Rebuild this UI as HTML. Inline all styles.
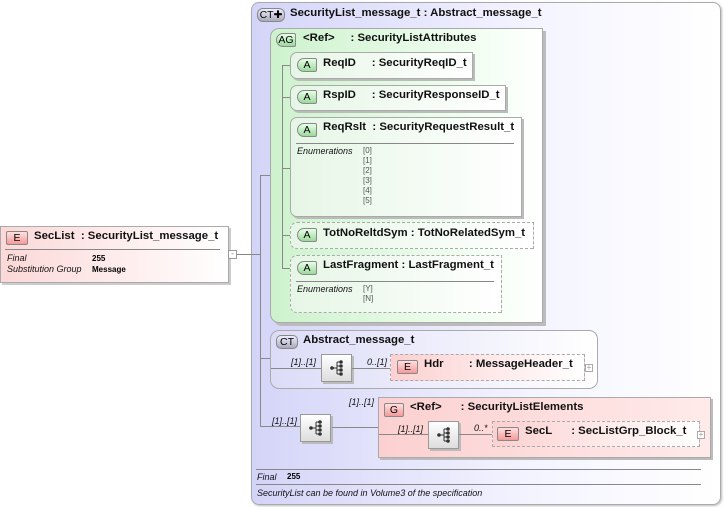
<!DOCTYPE html><html><head><style>
body{margin:0;width:724px;height:507px;background:#fff;font-family:"Liberation Sans",sans-serif;position:relative;overflow:hidden}
div{position:absolute;box-sizing:border-box}
.b{font-weight:bold;font-size:11.4px;color:#111;white-space:nowrap}
.i{font-style:italic;font-size:9px;color:#111;white-space:nowrap}
.s{font-size:8px;color:#555}
.tag{font-size:10.5px;border:1px solid #888;text-align:center;line-height:12px;height:14px;border-radius:2px}
.sh{filter:drop-shadow(2px 2px 0 #bbb)}
.att{background:linear-gradient(90deg,#e6f6e6,#fff);border:1px solid #aaa;border-radius:7px 0 0 7px}
.atag{background:linear-gradient(#e8ffe8,#9cd89c);border-radius:7px 2px 2px 7px}
.etag{background:linear-gradient(#ffe0e0,#f49a9a)}
.l{background:#888}
.seq{width:31px;height:28px;background:linear-gradient(#fff,#ddd);border:1px solid #999;box-shadow:2px 2px 0 #bbb}
</style></head><body>
<svg width="0" height="0" style="position:absolute"><defs><g id="sq"><circle cx="3" cy="8" r="1.8" fill="#333"/><path d="M3 8H8M8 2V14M8 2H11M8 6H11M8 10H11M8 14H11" stroke="#333" fill="none"/><circle cx="12" cy="2" r="1.8" fill="#333"/><circle cx="12" cy="6" r="1.8" fill="#333"/><circle cx="12" cy="10" r="1.8" fill="#333"/><circle cx="12" cy="14" r="1.8" fill="#333"/></g></defs></svg>
<div style="left:251px;top:2px;width:470px;height:503px;border:1px solid #aaa;border-radius:8px;background:linear-gradient(90deg,#d4d4f8,#f4f4ff 60%,#fff);box-shadow:1px 1px 2px #bbb"></div>
<div class="tag" style="left:257px;top:8px;width:28px;background:linear-gradient(#eef,#aab);border-radius:6px">CT✚</div>
<div class="b" style="left:290px;top:7px">SecurityList_message_t : Abstract_message_t</div>
<div style="left:270px;top:28px;width:273px;height:295px;border:1px solid #aaa;border-radius:9px 0 0 9px;background:linear-gradient(90deg,#cdf2cd,#f4fff4 80%,#fff);box-shadow:3px 3px 0 #bbb"></div>
<div class="tag atag" style="left:276px;top:33px;width:20px">AG</div>
<div class="b" style="left:303px;top:32px">&lt;Ref&gt;&nbsp;&nbsp;&nbsp;&nbsp;&nbsp;: SecurityListAttributes</div>
<div class="l" style="left:282px;top:65px;width:1px;height:204px"></div>
<div class="l" style="left:282px;top:65px;width:8px;height:1px"></div>
<div class="l" style="left:282px;top:97px;width:8px;height:1px"></div>
<div class="l" style="left:282px;top:168px;width:8px;height:1px"></div>
<div class="l" style="left:282px;top:235px;width:8px;height:1px"></div>
<div class="l" style="left:282px;top:268px;width:8px;height:1px"></div>
<div class="att sh" style="left:290px;top:52px;width:183px;height:27px"></div>
<div class="tag atag" style="left:297px;top:58px;width:20px">A</div>
<div class="b" style="left:323px;top:57px">ReqID&nbsp;&nbsp;&nbsp;&nbsp;&nbsp;: SecurityReqID_t</div>
<div class="att sh" style="left:290px;top:85px;width:216px;height:26px"></div>
<div class="tag atag" style="left:297px;top:90px;width:20px">A</div>
<div class="b" style="left:323px;top:89px">RspID&nbsp;&nbsp;&nbsp;&nbsp;&nbsp;: SecurityResponseID_t</div>
<div class="att sh" style="left:290px;top:117px;width:232px;height:100px"></div>
<div class="tag atag" style="left:297px;top:123px;width:20px">A</div>
<div class="b" style="left:323px;top:121px">ReqRslt&nbsp;&nbsp;: SecurityRequestResult_t</div>
<div class="l" style="left:296px;top:143px;width:218px;height:1px"></div>
<div class="i" style="left:297px;top:146px">Enumerations</div>
<div class="s" style="left:363px;top:146px;line-height:10px">[0]<br>[1]<br>[2]<br>[3]<br>[4]<br>[5]</div>
<div class="att" style="left:290px;top:222px;width:244px;height:27px;border:1px dashed #aaa"></div>
<div class="tag atag" style="left:297px;top:228px;width:20px">A</div>
<div class="b" style="left:323px;top:227px">TotNoReltdSym : TotNoRelatedSym_t</div>
<div class="att" style="left:290px;top:255px;width:212px;height:58px;border:1px dashed #aaa"></div>
<div class="tag atag" style="left:297px;top:261px;width:20px">A</div>
<div class="b" style="left:323px;top:259px">LastFragment : LastFragment_t</div>
<div class="l" style="left:296px;top:281px;width:198px;height:1px"></div>
<div class="i" style="left:297px;top:284px">Enumerations</div>
<div class="s" style="left:363px;top:284px;line-height:10px">[Y]<br>[N]</div>
<div style="left:0;top:226px;width:229px;height:57px;border:1px solid #aaa;background:linear-gradient(90deg,#fcd8d8,#fff);box-shadow:2px 2px 0 #ccc"></div>
<div class="tag etag" style="left:6px;top:231px;width:22px">E</div>
<div class="b" style="left:34px;top:230px">SecList&nbsp;&nbsp;: SecurityList_message_t</div>
<div class="l" style="left:5px;top:249px;width:215px;height:1px"></div>
<div class="i" style="left:7px;top:253px;line-height:11px">Final<br>Substitution Group</div>
<div style="left:92px;top:253px;font-size:8px;font-weight:bold;line-height:11px">255<br>Message</div>
<div style="left:228px;top:250px;width:9px;height:9px;border:1px solid #999;background:#fff;font-size:8px;line-height:6px;text-align:center;color:#777">-</div>
<div class="l" style="left:237px;top:254px;width:23px;height:1px"></div>
<div class="l" style="left:260px;top:175px;width:1px;height:252px"></div>
<div class="l" style="left:260px;top:175px;width:10px;height:1px"></div>
<div class="l" style="left:260px;top:358px;width:10px;height:1px"></div>
<div class="l" style="left:260px;top:426px;width:40px;height:1px"></div>
<div style="left:270px;top:330px;width:328px;height:59px;border:1px solid #aaa;border-radius:9px;background:linear-gradient(90deg,#dcdcf8,#fff)"></div>
<div class="tag" style="left:276px;top:335px;width:22px;background:linear-gradient(#eef,#aab);border-radius:5px">CT</div>
<div class="b" style="left:303px;top:334px">Abstract_message_t</div>
<div class="l" style="left:271px;top:368px;width:50px;height:1px"></div>
<div class="i" style="left:291px;top:357px">[1]..[1]</div>
<div class="seq" style="left:321px;top:354px"><svg width="16" height="16" style="position:absolute;left:7px;top:5px"><use href="#sq"/></svg></div>
<div class="l" style="left:352px;top:368px;width:38px;height:1px"></div>
<div class="i" style="left:367px;top:357px">0..[1]</div>
<div style="left:390px;top:354px;width:195px;height:27px;border:1px dashed #aaa;background:linear-gradient(90deg,#fcd0d0,#fff)"></div>
<div class="tag etag" style="left:397px;top:360px;width:21px">E</div>
<div class="b" style="left:424px;top:358px">Hdr&nbsp;&nbsp;&nbsp;&nbsp;&nbsp;&nbsp;&nbsp;&nbsp;: MessageHeader_t</div>
<div style="left:585px;top:364px;width:8px;height:8px;border:1px solid #aaa;font-size:8px;line-height:6px;text-align:center;color:#999">+</div>
<div class="i" style="left:272px;top:416px">[1]..[1]</div>
<div class="seq" style="left:300px;top:414px"><svg width="16" height="16" style="position:absolute;left:7px;top:5px"><use href="#sq"/></svg></div>
<div class="l" style="left:332px;top:427px;width:46px;height:1px"></div>
<div class="i" style="left:349px;top:397px">[1]..[1]</div>
<div style="left:378px;top:397px;width:333px;height:61px;border:1px solid #aaa;background:linear-gradient(90deg,#fcd0d0,#ffeaea);box-shadow:2px 2px 0 #bbb"></div>
<div class="tag etag" style="left:384px;top:403px;width:20px">G</div>
<div class="b" style="left:410px;top:401px">&lt;Ref&gt;&nbsp;&nbsp;&nbsp;&nbsp;&nbsp;&nbsp;: SecurityListElements</div>
<div class="l" style="left:379px;top:434px;width:49px;height:1px"></div>
<div class="i" style="left:398px;top:424px">[1]..[1]</div>
<div class="seq" style="left:428px;top:421px"><svg width="16" height="16" style="position:absolute;left:7px;top:5px"><use href="#sq"/></svg></div>
<div class="l" style="left:459px;top:434px;width:33px;height:1px"></div>
<div class="i" style="left:474px;top:423px">0..*</div>
<div style="left:492px;top:421px;width:208px;height:26px;border:1px dashed #aaa;background:linear-gradient(90deg,#fcd0d0,#fff)"></div>
<div class="tag etag" style="left:497px;top:427px;width:22px">E</div>
<div class="b" style="left:525px;top:425px">SecL&nbsp;&nbsp;&nbsp;&nbsp;&nbsp;&nbsp;: SecListGrp_Block_t</div>
<div style="left:697px;top:431px;width:8px;height:8px;border:1px solid #aaa;font-size:8px;line-height:6px;text-align:center;color:#999;background:#fff">+</div>
<div class="l" style="left:256px;top:469px;width:445px;height:1px"></div>
<div class="i" style="left:257px;top:472px">Final</div>
<div style="left:287px;top:472px;font-size:8px;font-weight:bold">255</div>
<div class="l" style="left:256px;top:484px;width:445px;height:1px"></div>
<div class="i" style="left:257px;top:488px">SecurityList can be found in Volume3 of the specification</div>
</body></html>
